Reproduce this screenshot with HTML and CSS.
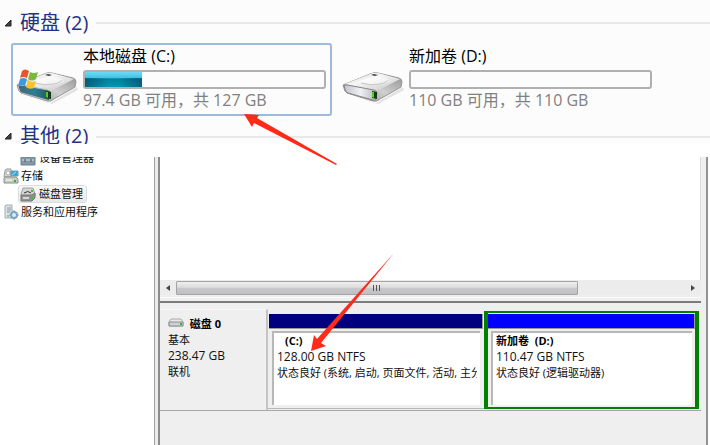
FILE: index.html
```
<!DOCTYPE html>
<html lang="zh-CN">

<head>
  <meta charset="UTF-8">
  <meta name="viewport" content="width=device-width, initial-scale=1.0">
  <title>磁盘管理</title>
  <link rel="stylesheet" href="styles.css">
</head>

<body>
  <!-- shared drawings -->
  <svg class="defs" width="0" height="0" aria-hidden="true">
    <defs>
      <linearGradient id="lid" x1="0" y1="0" x2="1" y2="1">
        <stop offset="0" stop-color="#d0d0d0"/>
        <stop offset=".4" stop-color="#f6f6f6"/>
        <stop offset="1" stop-color="#c4c4c4"/>
      </linearGradient>
      <linearGradient id="side" x1="0" y1="1" x2="1" y2="0">
        <stop offset="0" stop-color="#808080"/>
        <stop offset=".5" stop-color="#d0d0d0"/>
        <stop offset="1" stop-color="#8c8c8c"/>
      </linearGradient>
      <linearGradient id="faceGrey" x1="0" y1="0" x2="1" y2="0">
        <stop offset="0" stop-color="#c4c4cc"/>
        <stop offset=".5" stop-color="#efeff6"/>
        <stop offset="1" stop-color="#b4b4bc"/>
      </linearGradient>
      <linearGradient id="faceTeal" x1="0" y1="0" x2="1" y2="0">
        <stop offset="0" stop-color="#4a6478"/>
        <stop offset=".5" stop-color="#2f7f90"/>
        <stop offset="1" stop-color="#24505c"/>
      </linearGradient>
      <symbol id="drive" viewBox="0 0 62 36">
        <path d="M3 25 L34 34 L61 18 L62 21 L36 35 Z" fill="#000" opacity=".1"/>
        <path d="M1 16 L28 5 Q32 3 36 4 L57 9 Q60 10 60 13 L59 18 L38 30 Q35 33 31 32 L5 24 Q2 22 2 19 Z" fill="url(#side)" stroke="#959595"/>
        <path d="M3 15 L28 5 Q32 3 36 4 L58 10 L39 20 Q36 22 31 21 Z" fill="url(#lid)"/>
        <path d="M17 13 Q25 8 38 8 Q50 10 47 13 Q39 17 29 16 Q21 15 17 13 Z" fill="#fff" opacity=".5"/>
        <path d="M19 14 Q29 17 38 15 Q46 13 46 11" fill="none" stroke="#c4c4c4"/>
        <path d="M29 6 L32 5 L36 6 L33 7 Z" fill="#444"/>
      </symbol>
      <symbol id="led" viewBox="0 0 62 36">
        <path d="M30 22 L35 23 L35 30 L30 29 Z" fill="#153c14"/>
        <path d="M30 23 L32 23 L32 29 L30 28 Z" fill="#54d01c"/>
      </symbol>
    </defs>
  </svg>

  <section class="explorer">
    <h2 class="group-title">
      <button type="button" class="toggle" aria-label="折叠硬盘">
        <svg width="8" height="8" viewBox="0 0 8 8"><path d="M7 1V7H1Z" fill="#444" stroke="#222"/></svg>
      </button>
      <span>硬盘 (2)</span>
    </h2>

    <div class="drives">
      <a href="#" class="drive selected">
        <svg class="drive-icon" viewBox="0 0 62 36">
          <use href="#drive"/>
          <path d="M2 17 Q3 16 5 16 L32 21 Q35 22 35 24 L34 30 Q33 32 31 31 L6 24 Q3 23 3 20 Z" fill="url(#faceTeal)" stroke="#b4bcc0"/>
          <use href="#led"/>
          <path d="M6 2 Q9 -1 13 2 L11 9 Q7 7 4 9 Z" fill="#e8552a"/>
          <path d="M14 3 Q18 5 22 3 L20 10 Q16 13 12 10 Z" fill="#7cb83c"/>
          <path d="M4 10 Q7 8 11 10 L9 17 Q6 15 2 17 Z" fill="#3c9be0"/>
          <path d="M12 11 Q15 14 20 12 L18 19 Q13 21 10 18 Z" fill="#f8c42c"/>
        </svg>
        <div class="drive-info">
          <div class="drive-name">本地磁盘 (C:)</div>
          <div class="capacity"><div class="used" style="width: 24%"></div></div>
          <div class="drive-space">97.4 GB 可用，共 127 GB</div>
        </div>
      </a>
      <a href="#" class="drive">
        <svg class="drive-icon" viewBox="0 0 62 36">
          <use href="#drive"/>
          <path d="M2 17 Q3 16 5 16 L32 21 Q35 22 35 24 L34 30 Q33 32 31 31 L6 24 Q3 23 3 20 Z" fill="url(#faceGrey)" stroke="#888"/>
          <use href="#led"/>
        </svg>
        <div class="drive-info">
          <div class="drive-name">新加卷 (D:)</div>
          <div class="capacity"></div>
          <div class="drive-space">110 GB 可用，共 110 GB</div>
        </div>
      </a>
    </div>

    <h2 class="group-title cut">
      <button type="button" class="toggle" aria-label="折叠其他">
        <svg width="8" height="8" viewBox="0 0 8 8"><path d="M7 1V7H1Z" fill="#444" stroke="#222"/></svg>
      </button>
      <span>其他 (2)</span>
    </h2>
  </section>

  <section class="manager">
    <nav class="tree">
      <a href="#" class="node child">
        <svg width="16" height="16" viewBox="0 0 16 16">
          <path d="M1 7H15V15H1Z" fill="#8298a4" stroke="#6f828c"/>
          <path d="M5 7V5H11V7" fill="none" stroke="#52646e"/>
          <path d="M2 10H14" stroke="#d5e2e8"/>
          <path d="M5 9V12M11 9V12" stroke="#45545c"/>
        </svg>
        <span>设备管理器</span>
      </a>
      <a href="#" class="node">
        <svg width="16" height="16" viewBox="0 0 16 16">
          <path d="M2 3Q2 1 4 1H8V9H1Z" fill="#dcdcd4" stroke="#999"/>
          <circle cx="5" cy="5" r="2" fill="#fff" stroke="#aaa"/>
          <path d="M8 3H15V8H8Z" fill="#2ea8dc" stroke="#7898ac"/>
          <path d="M9 7L13 4" stroke="#a8e4fa"/>
          <path d="M2 9H13L15 11V15H1V10Z" fill="#c8ccc8" stroke="#8c908c"/>
          <path d="M3 12H9" stroke="#fff"/>
          <path d="M11 12H13V14H11Z" fill="#35b42a"/>
        </svg>
        <span>存储</span>
      </a>
      <a href="#" class="node child current">
        <svg width="16" height="16" viewBox="0 0 16 16">
          <path d="M3 2H13L15 8V10H1V8Z" fill="#d5d5d5" stroke="#a2a2a2"/>
          <path d="M4 7Q8 4 11 7" fill="none" stroke="#333"/>
          <path d="M1 9H12L15 7V12L12 15H1Z" fill="#909090" stroke="#777"/>
          <path d="M3 11H9V13H3Z" fill="#d8d8d8"/>
          <path d="M11 4H13V6H11ZM11 11H13V13H11Z" fill="#39c524"/>
        </svg>
        <span>磁盘管理</span>
      </a>
      <a href="#" class="node">
        <svg width="16" height="16" viewBox="0 0 16 16">
          <path d="M3 1H9V14H2V2Z" fill="#dbe3e6" stroke="#a0aeb4"/>
          <path d="M4 4H8M4 6H8M4 8H7" stroke="#8a9aa4"/>
          <path d="M4 12H6" stroke="#43b435"/>
          <circle cx="11" cy="11" r="3" fill="#d9edf9" stroke="#7ba4c4" stroke-width="2"/>
          <path d="M11 6V8M11 14V16M6 11H8M14 11H16M8 8L9 9M13 13L14 14M14 8L13 9M8 14L9 13" stroke="#7ba4c4"/>
        </svg>
        <span>服务和应用程序</span>
      </a>
    </nav>

    <div class="grip"></div>

    <main class="pane">
      <div class="volume-list"></div>
      <div class="scrollbar">
        <button type="button" aria-label="向左滚动"><svg width="4" height="6" viewBox="0 0 4 6"><path d="M4 0V6L0 3Z" fill="#444"/></svg></button>
        <div class="track">
          <div class="thumb"><i></i><i></i><i></i></div>
        </div>
        <button type="button" aria-label="向右滚动"><svg width="4" height="6" viewBox="0 0 4 6"><path d="M0 0V6L4 3Z" fill="#444"/></svg></button>
      </div>
      <div class="splitter"></div>

      <div class="disk">
        <div class="disk-label">
          <strong>
            <svg width="16" height="10" viewBox="0 0 16 10">
              <path d="M3 1H13L15 4V8H1V4Z" fill="#e9e9e9" stroke="#aaa"/>
              <path d="M1 4H15V8H1Z" fill="#d0d0d4" stroke="#8c8c92"/>
              <path d="M12 5H14V7H12Z" fill="#39b52a"/>
            </svg>
            磁盘 0
          </strong>
          <div>基本</div>
          <div class="size">238.47 GB</div>
          <div>联机</div>
        </div>
        <div class="volume primary">
          <div class="stripe"></div>
          <div class="volume-body">
            <strong class="indent">(C:)</strong>
            <div class="size">128.00 GB NTFS</div>
            <div class="status">状态良好 (系统, 启动, 页面文件, 活动, 主分区)</div>
          </div>
        </div>
        <div class="volume logical">
          <div class="stripe"></div>
          <div class="volume-body">
            <strong>新加卷 &nbsp;(D:)</strong>
            <div class="size">110.47 GB NTFS</div>
            <div class="status">状态良好 (逻辑驱动器)</div>
          </div>
        </div>
      </div>
    </main>
  </section>

  <!-- red pointers from each size to the other -->
  <svg class="arrow arrow-top" width="94" height="54" viewBox="0 0 94 54">
    <path d="M0 1L15 2L13 5L93 51L92 52L10 10L8 14Z" fill="#ff2a1a"/>
  </svg>
  <svg class="arrow arrow-bottom" width="84" height="100" viewBox="0 0 84 100">
    <path d="M83 0L10 90L15 93L0 98L3 82L6 86Z" fill="#ff2a1a"/>
  </svg>
</body>

</html>
```
FILE: styles.css
```
* {
  box-sizing: border-box;
}

body {
  margin: 0;
  min-height: 100vh;
  display: flex;
  flex-direction: column;
  position: relative;
  background: #fff;
  color: #111;
  font-family: "Open Sans", "Noto Sans CJK SC", sans-serif;
  font-size: 11px;
  line-height: 16px;
}

a {
  color: inherit;
  text-decoration: none;
}

button {
  padding: 0;
  border: none;
  background: none;
  display: flex;
  align-items: center;
  justify-content: center;
}

.defs {
  position: absolute;
}

/* drive list */
.explorer {
  background: #fcfcfc;
  padding-top: 11px;
  margin-bottom: 13px;
}

.group-title {
  display: flex;
  align-items: center;
  gap: 8px;
  margin: 0;
  padding-left: 4px;
  height: 24px;
  color: #1e3287;
  font-size: 20px;
  font-weight: normal;
  line-height: 24px;
}

.group-title::after {
  content: "";
  flex: 1;
  height: 2px;
  background: #e8e8e8;
}

.group-title.cut {
  align-items: flex-start;
  height: 20px;
  overflow: hidden;
}

.group-title.cut::after {
  margin-top: 12px;
}

.cut .toggle {
  margin-top: 8px;
}

.drives {
  display: grid;
  grid-template-columns: repeat(auto-fill, 321px);
  gap: 5px;
  padding: 8px 11px;
}

.drive {
  display: flex;
  gap: 5px;
  height: 73px;
  padding: 4px 5px 0 4px;
  border: 1px solid transparent;
  border-radius: 3px;
}

.drive.selected {
  border: 2px solid #9db9db;
  padding: 3px 4px 0 3px;
}

.drive-icon {
  width: 62px;
  height: 36px;
  margin-top: 21px;
  overflow: visible;
}

.drive-info {
  flex: 1;
  font-size: 16px;
  line-height: 22px;
  white-space: nowrap;
}

.drive-name {
  line-height: 16px;
  margin-bottom: 6px;
  color: #000;
}

.capacity {
  height: 19px;
  border: 2px solid #b0b0b0;
  border-radius: 3px;
}

.used {
  height: 100%;
  background: linear-gradient(to right, rgba(0, 50, 75, 0.5), transparent 40%, transparent 60%, rgba(0, 50, 75, 0.5)) 0 100% / 100% 60% no-repeat,
    linear-gradient(#6cdcf5 0, #3fc0e2 40%, #007f9f 45%, #0098b4);
}

.drive-space {
  color: #808080;
}

/* computer management */
.manager {
  flex: 1;
  display: flex;
  overflow: hidden;
}

.tree {
  width: 154px;
  margin-top: -8px;
  clip-path: inset(8px 0 0 0);
}

.node {
  display: flex;
  align-items: center;
  gap: 2px;
  width: max-content;
  height: 18px;
  margin-left: 1px;
  padding: 0 3px 0 1px;
  border: 1px solid transparent;
}

.node.child {
  margin-left: 18px;
  gap: 3px;
}

.node.current {
  border-color: #ddd;
  border-radius: 3px;
  background: linear-gradient(#f9f9f9, #e8e8e8);
}

.grip {
  width: 6px;
  background: #ebebf0;
  border-left: 1px solid #a0a0a0;
  border-right: 2px solid #8c8c8c;
}

.pane {
  flex: 1;
  min-width: 0;
  display: flex;
  flex-direction: column;
  margin-right: 2px;
  padding-right: 5px;
  background: #efefef;
  border-right: 2px solid #929292;
}

.volume-list {
  height: 123px;
  background: #fff;
  border-right: 1px solid #ddd;
}

.scrollbar {
  display: flex;
  height: 15px;
  padding-top: 1px;
  background: #ececec;
}

.scrollbar button {
  width: 16px;
}

.track {
  flex: 1;
}

.thumb {
  display: flex;
  align-items: center;
  justify-content: center;
  gap: 1px;
  width: 79%;
  height: 14px;
  border: 1px solid #a4a4a4;
  border-radius: 1px;
  background: linear-gradient(#eee, #dcdcdc 45%, #c8c8ca 50%, #c0c0c2);
}

.thumb i {
  width: 2px;
  height: 6px;
  border-left: 1px solid #555;
}

.splitter {
  height: 8px;
  background: linear-gradient(#efefef 2px, #fafafa 2px, #fafafa 3px, #efefef 3px);
  border-bottom: 2px solid #7c7c7c;
}

.disk {
  display: flex;
  height: 102px;
  margin-top: 6px;
  padding-right: 2px;
  border-bottom: 1px solid #a8a8a8;
}

.disk-label {
  width: 108px;
  padding: 6px 8px 0;
  border-top: 1px solid #f8f8f8;
  border-right: 2px solid #c4c4c4;
}

strong {
  display: block;
  color: #000;
}

.disk-label strong svg {
  margin-right: 3px;
}

.size {
  font-size: 12px;
}

.volume {
  flex: 1;
  min-width: 0;
  height: 98px;
  margin-top: 2px;
  padding-top: 3px;
}

.primary {
  padding-left: 1px;
  padding-right: 1px;
  border-bottom: 1px solid #b8b8b8;
}

.logical {
  flex: none;
  width: 50%;
  max-width: 215px;
  padding-top: 1px;
  border: 2px solid #008000;
  border-width: 2px 4px;
}

.stripe {
  height: 15px;
  border: 1px solid #999;
  border-width: 0 1px 1px 0;
  background: #00007f;
}

.logical .stripe {
  background: #00f;
}

.volume-body {
  height: 74px;
  margin: 2px 3px 0;
  padding-left: 3px;
  background: #fff;
  border: 1px solid #b8b8b8;
  border-width: 2px 0 0 2px;
  white-space: nowrap;
}

.status {
  margin-right: 3px;
  overflow: hidden;
}

.indent {
  margin-left: 8px;
}

/* pointers lying over both windows */
.arrow {
  position: absolute;
}

.arrow-top {
  left: 244px;
  top: 113px;
}

.arrow-bottom {
  left: 311px;
  top: 253px;
}
```
